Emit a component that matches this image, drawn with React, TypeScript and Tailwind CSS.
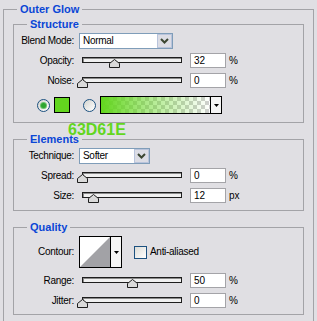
import React from "react";

const LABEL = "w-[60px] shrink-0 text-right text-[10px] tracking-[-0.3px] leading-none text-black";

function Chevron() {
  return (
    <svg width="9" height="6" viewBox="0 0 9 6">
      <path d="M1 1 L4.5 4.5 L8 1" fill="none" stroke="#3b4632" strokeWidth="2" />
    </svg>
  );
}

function Select({ text, width }: { text: string; width: string }) {
  return (
    <div className={`ml-[5px] flex h-[16px] ${width} items-stretch border border-[#7f9db9] bg-white`}>
      <div className="flex flex-1 items-center pl-[3px] text-[10px] tracking-[-0.3px] leading-none">{text}</div>
      <div className="flex w-[15px] items-center justify-center border border-[#b9c4dc] bg-[#dcdde5]">
        <Chevron />
      </div>
    </div>
  );
}

function Slider({ value }: { value: number }) {
  return (
    <div className="relative ml-[8px] h-[15px] w-[100px] shrink-0">
      <div className="mt-[4px] h-[6px] w-[100px] border border-[#1e1e1e] bg-[#f0f0f0] shadow-[inset_1px_1px_0_#8a8a8a]" />
      <svg className="absolute top-[6px]" style={{ left: value - 5 }} width="11" height="9" viewBox="0 0 11 9">
        <polygon points="5.5,0.5 10.5,4.5 10.5,8.5 0.5,8.5 0.5,4.5" fill="#dadada" stroke="#1e1e1e" strokeWidth="1" />
      </svg>
    </div>
  );
}

function SliderRow({ label, value, num, unit, className = "" }: { label: string; value: number; num: string; unit: string; className?: string }) {
  return (
    <div className={`flex h-[15px] items-center ${className}`}>
      <div className={LABEL}>{label}</div>
      <Slider value={value} />
      <div className="ml-[8px] flex h-[15px] w-[36px] items-center border border-[#a4a4a8] bg-white pl-[3px] text-[10px] leading-none">
        {num}
      </div>
      <div className="ml-[3px] text-[10px] leading-none">{unit}</div>
    </div>
  );
}

function Legend({ children }: { children: React.ReactNode }) {
  return (
    <legend className="ml-[13px] px-[3px] text-[11px] font-bold leading-[12px] text-[#0a46d6]">{children}</legend>
  );
}

function Radio({ checked }: { checked?: boolean }) {
  return (
    <div className="flex h-[13px] w-[13px] items-center justify-center rounded-full border border-[#1c5180] bg-[linear-gradient(135deg,#d4d4cf,#ffffff)]">
      {checked && <div className="h-[5px] w-[5px] rounded-full bg-[#2fa52f] shadow-[0_0_0_1px_#6cc36c]" />}
    </div>
  );
}

function DownArrow() {
  return (
    <svg width="5" height="3" viewBox="0 0 5 3">
      <polygon points="0,0 5,0 2.5,3" fill="#000" />
    </svg>
  );
}

export default function App() {
  return (
    <div className="relative h-[321px] w-[317px] overflow-hidden bg-[#e0dfe3] font-['Liberation_Sans',Arial,sans-serif] text-black">
      <fieldset className="ml-[3px] mt-[3px] w-[311px] border border-[#a3a3a7] pb-[40px]">
        <Legend>Outer Glow</Legend>

        {/* Structure */}
        <fieldset className="ml-[9px] mt-[3px] w-[291px] border border-[#a3a3a7]">
          <Legend>Structure</Legend>
          <div className="flex flex-col pt-[3px] pb-[8px]">
            <div className="flex h-[16px] items-center">
              <div className={LABEL}>Blend Mode:</div>
              <Select text="Normal" width="w-[94px]" />
            </div>
            <SliderRow className="mt-[4px]" label="Opacity:" value={32} num="32" unit="%" />
            <SliderRow className="mt-[5px]" label="Noise:" value={0} num="0" unit="%" />
            <div className="mt-[8px] flex h-[18px] items-center pl-[23px]">
              <Radio checked />
              <div className="ml-[4px] h-[16px] w-[16px] border border-black bg-[#63d61e]" />
              <div className="ml-[13px]">
                <Radio />
              </div>
              <div className="ml-[4px] flex h-[18px] w-[122px] border border-black">
                <div className="flex w-[109px] bg-[image:repeating-conic-gradient(#cfcfcf_0_25%,#ffffff_0_50%)] bg-size-[8px_8px]">
                  <div className="flex-1 bg-[linear-gradient(to_right,#63d61e,rgba(99,214,30,0.55)_40%,rgba(99,214,30,0))]" />
                </div>
                <div className="flex w-[11px] items-center justify-center border-l border-black bg-[#f4f4f4]">
                  <DownArrow />
                </div>
              </div>
            </div>
          </div>
        </fieldset>

        {/* Elements */}
        <fieldset className="ml-[9px] mt-[10px] w-[291px] border border-[#a3a3a7]">
          <Legend>Elements</Legend>
          <div className="flex flex-col pt-[3px] pb-[7px]">
            <div className="flex h-[16px] items-center">
              <div className={LABEL}>Technique:</div>
              <Select text="Softer" width="w-[71px]" />
            </div>
            <SliderRow className="mt-[4px]" label="Spread:" value={0} num="0" unit="%" />
            <SliderRow className="mt-[5px]" label="Size:" value={11} num="12" unit="px" />
          </div>
        </fieldset>

        {/* Quality */}
        <fieldset className="ml-[9px] mt-[10px] w-[291px] border border-[#a3a3a7]">
          <Legend>Quality</Legend>
          <div className="flex flex-col pt-[3px] pb-[6px]">
            <div className="flex h-[32px] items-center">
              <div className={LABEL}>Contour:</div>
              <div className="ml-[5px] flex h-[32px] w-[43px] border border-black bg-white">
                <svg width="30" height="30" viewBox="0 0 30 30">
                  <rect x="0" y="0" width="30" height="30" fill="#ffffff" />
                  <polygon points="0,30 30,0 30,30" fill="#a2a2a6" />
                </svg>
                <div className="flex w-[11px] items-center justify-center border-l border-black bg-[#f6f6f6]">
                  <DownArrow />
                </div>
              </div>
              <div className="ml-[12px] h-[13px] w-[13px] border border-[#1c5180] bg-[linear-gradient(135deg,#dcdcd7,#ffffff)]" />
              <div className="ml-[3px] text-[10px] tracking-[-0.3px] leading-none">Anti-aliased</div>
            </div>
            <SliderRow className="mt-[5px]" label="Range:" value={50} num="50" unit="%" />
            <SliderRow className="mt-[5px]" label="Jitter:" value={0} num="0" unit="%" />
          </div>
        </fieldset>
      </fieldset>

      <div className="absolute left-[68px] top-[122px] text-[16px] font-bold leading-[16px] text-[#63d61e]">63D61E</div>
    </div>
  );
}
